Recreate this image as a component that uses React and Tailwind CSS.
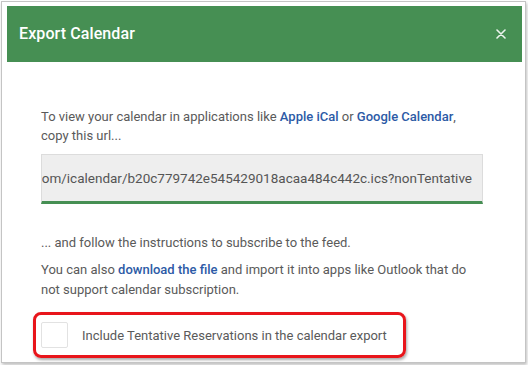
import React, { useState } from 'react';

export default function App() {
  const [tentative, setTentative] = useState(false);
  const url = 'https://app.example.com/icalendar/b20c779742e545429018acaa484c442c.ics?nonTentative';

  return (
    <div className="w-[528px] h-[365px] bg-white pl-[1px] pt-[1px]" style={{ fontFamily: 'Roboto, "Liberation Sans", sans-serif' }}>
      {/* Modal frame */}
      <div className="w-[525px] h-[362px] border border-[#c4c4c4] shadow-[1px_2px_3px_rgba(0,0,0,0.25)] bg-white pt-[4px] pl-[5px] pr-[3px] overflow-hidden">
        {/* Header */}
        <div className="h-[56px] bg-[#468f53] flex items-center justify-between pl-[12px] pr-[16px]">
          <h2 className="text-[16px] text-white font-medium tracking-[0.1px]">Export Calendar</h2>
          <button className="text-white/90">
            <svg width="10" height="10" viewBox="0 0 10 10" stroke="currentColor" strokeWidth="1.6" strokeLinecap="round">
              <path d="M1 1l8 8M9 1l-8 8" />
            </svg>
          </button>
        </div>

        {/* Body */}
        <div className="pl-[34px] pr-[37px] pt-[45px] text-[13px] text-[#5a5a5a] leading-[19px]">
          <p>
            To view your calendar in applications like{' '}
            <a className="text-[#2c5aa6] font-medium">Apple iCal</a> or{' '}
            <a className="text-[#2c5aa6] font-medium">Google Calendar</a>, copy this url...
          </p>

          <div className="mt-[9px] w-[442px] h-[50px] bg-[#eeeeee] border border-[#dcdcdc] border-b-[3px] border-b-[#468f53] flex items-center justify-end overflow-hidden">
            <span className="whitespace-nowrap text-[13.5px] text-[#555] pr-[10px]">{url}</span>
          </div>

          <p className="mt-[29px]">... and follow the instructions to subscribe to the feed.</p>
          <p className="mt-[8px] leading-[20px]">
            You can also <a className="text-[#2c5aa6] font-medium">download the file</a> and import it into apps like Outlook that do
            not support calendar subscription.
          </p>

          <div className="relative mt-[22px] flex items-center gap-[14px]">
            <button
              onClick={() => setTentative(!tentative)}
              className="w-[27px] h-[26px] border border-[#e2e2e2] bg-white rounded-[2px] flex items-center justify-center"
            >
              {tentative && (
                <svg width="14" height="14" viewBox="0 0 14 14" fill="none" stroke="#468f53" strokeWidth="2">
                  <path d="M2 7l3 3 7-7" />
                </svg>
              )}
            </button>
            <span className="text-[13px] text-[#5a5a5a]">Include Tentative Reservations in the calendar export</span>
            {/* annotation ring */}
            <div className="absolute left-[-8px] top-[-10px] w-[373px] h-[46px] border-[3px] border-[#e8151b] rounded-[8px] shadow-[1px_2px_3px_rgba(0,0,0,0.35)] pointer-events-none" />
          </div>
        </div>
      </div>
    </div>
  );
}
